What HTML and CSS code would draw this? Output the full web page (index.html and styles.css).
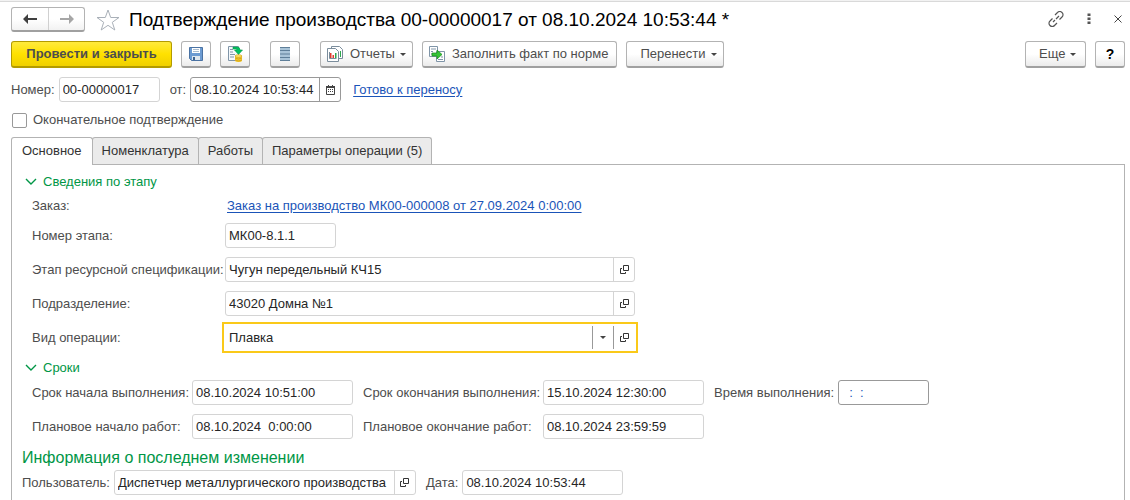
FILE: index.html
```html
<!DOCTYPE html>
<html lang="ru">
<head>
    <meta charset="UTF-8">
    <meta name="viewport" content="width=device-width, initial-scale=1.0">
    <title>Подтверждение производства</title>
    <link rel="stylesheet" href="styles.css">
</head>
<body>
    <svg class="sprite" aria-hidden="true">
        <symbol id="icon-open" viewBox="0 0 9 9">
            <path d="M3.500 .5h5v5h-5zM2 3.500H.5v5h5V7" fill="none" stroke="#333" />
        </symbol>
        <symbol id="icon-chevron" viewBox="0 0 12 8">
            <path d="M1 1l5 5 5-5" fill="none" stroke="#009646" stroke-width="1.4" />
        </symbol>
    </svg>

    <header class="title-bar">
        <div class="nav-buttons">
            <button type="button" aria-label="Назад">
                <svg width="14" height="10" viewBox="0 0 14 10"><path d="M0 5L5 0v4h9v2H5v4z" fill="#404040" /></svg>
            </button>
            <button type="button" aria-label="Вперед">
                <svg width="14" height="10" viewBox="0 0 14 10"><path d="M14 5L9 0v4H0v2h9v4z" fill="#a6a6a6" /></svg>
            </button>
        </div>
        <button type="button" class="icon-btn star" aria-label="Избранное">
            <svg width="24" height="22" viewBox="0 0 24 22"><path d="M12 1l2.700 7.500h8.300l-6.700 4.800 2.500 7.700L12 16.300 5.200 21l2.500-7.700L1 8.500h8.300z" fill="#fff" stroke="#a9b0b8" /></svg>
        </button>
        <h1>Подтверждение производства 00-00000017 от 08.10.2024 10:53:44 *</h1>
        <div class="window-actions">
            <button type="button" class="icon-btn" aria-label="Ссылка">
                <svg width="16" height="16" viewBox="0 0 16 16"><path d="M5 11l2-2M8 8l3-3M7 4l2.500-2.500a3 3 0 0 1 4.500 0a3 3 0 0 1 0 4.500L11.500 8.500M9 12l-2.500 2.500a3 3 0 0 1-4.500 0a3 3 0 0 1 0-4.500L4.500 7.500" fill="none" stroke="#555" stroke-width="1.200" /></svg>
            </button>
            <button type="button" class="icon-btn" aria-label="Меню">
                <svg width="4" height="12" viewBox="0 0 4 12"><path d="M.5 .5h3v2.500h-3zM.5 4.500h3V7h-3zM.5 8.500h3V11h-3z" fill="#555" /></svg>
            </button>
            <button type="button" class="icon-btn" aria-label="Закрыть">
                <svg width="8" height="8" viewBox="0 0 8 8"><path d="M.5 .5l7 7M7.500 .5l-7 7" stroke="#444" /></svg>
            </button>
        </div>
    </header>

    <div class="toolbar">
        <button type="button" class="btn btn-primary">Провести и закрыть</button>
        <button type="button" class="btn btn-square" aria-label="Записать">
            <svg width="16" height="16" viewBox="0 0 16 16">
                <path d="M1.500 1.500h13v13h-11l-2-2z" fill="#6c9bd2" stroke="#4a72a3" />
                <path d="M4 2h8v5H4z" fill="#fff" />
                <path d="M5 3.500h6M5 5.500h6" stroke="#a9bccf" />
                <path d="M4 10h8v4H4z" fill="#dfe7ee" />
                <path d="M5 11h2v3H5z" fill="#3d638f" />
            </svg>
        </button>
        <button type="button" class="btn btn-square" aria-label="Провести">
            <svg width="16" height="16" viewBox="0 0 16 16">
                <path d="M1.500 .5h10v14h-10z" fill="#f4f8fb" stroke="#8095a8" />
                <path d="M3 3.500h3M3 6h3M3 8.500h5M3 11h4" stroke="#8095a8" />
                <path d="M6 1h4q3 0 3 3h2.500L11.500 8.500 7.500 4H10q0-1-1.500-1H6z" fill="#00c060" stroke="#009a48" stroke-width=".6" />
                <path d="M8 10v4.500c0 2 7 2 7 0V10z" fill="#f2c830" />
                <ellipse cx="11.500" cy="10" rx="3.500" ry="1.300" fill="#ffe36b" stroke="#c99a13" stroke-width=".6" />
                <path d="M8 12q3.500 2 7 0M8 14q3.500 2 7 0" fill="none" stroke="#c99a13" stroke-width=".7" />
            </svg>
        </button>
        <button type="button" class="btn btn-square gap-before" aria-label="Реестр">
            <svg width="12" height="16" viewBox="0 0 12 16">
                <path d="M1 1h10v14H1z" fill="#a9c4d8" />
                <path d="M1 1.500h10M1 4.500h10M1 8h10M1 11.500h10M1 14.500h10" stroke="#5f7f99" />
            </svg>
        </button>
        <button type="button" class="btn gap-before">
            <svg width="16" height="16" viewBox="0 0 16 16">
                <path d="M4.500 .5h8l3 3v9h-11z" fill="#fff" stroke="#7b8d9c" />
                <path d="M.5 2.500h8l3 3v10H.5z" fill="#fff" stroke="#7b8d9c" />
                <path d="M2.500 6v6.500h7" fill="none" stroke="#7b8d9c" />
                <path d="M3 7h1.500v5H3zM5.500 9H7v3H5.500z" fill="#e03c31" />
                <path d="M8 7h1.500v5H8zM13 5h1v6h-1z" fill="#2fa84f" />
            </svg>
            <span>Отчеты</span><i class="caret"></i>
        </button>
        <button type="button" class="btn btn-fill">
            <svg width="16" height="16" viewBox="0 0 16 16">
                <path d="M.5 .5h8v10h-8z" fill="#fff" stroke="#8095a8" />
                <path d="M2 3h5M2 5.500h2M2 8h2" stroke="#8095a8" />
                <path d="M7.500 5.500h8v10h-8z" fill="#fff" stroke="#8095a8" />
                <path d="M9 13.500h5M12 11h2" stroke="#8095a8" />
                <path d="M3 7h5V4l5 4.500L8 13v-3H3z" fill="#35c435" stroke="#198a1d" stroke-width=".7" />
            </svg>
            <span>Заполнить факт по норме</span>
        </button>
        <button type="button" class="btn btn-text"><span>Перенести</span><i class="caret"></i></button>
        <button type="button" class="btn btn-text push-right"><span>Еще</span><i class="caret"></i></button>
        <button type="button" class="btn btn-square btn-help">?</button>
    </div>

    <div class="form-row header-row">
        <label for="number">Номер:</label>
        <input type="text" id="number" class="field number-field" value="00-00000017" readonly>
        <label for="date" class="next-label">от:</label>
        <div class="field combo active date-field">
            <input type="text" id="date" value="08.10.2024 10:53:44">
            <button type="button" aria-label="Выбрать дату">
                <svg width="9" height="10" viewBox="0 0 9 10">
                    <path d="M.5 1.500h8v8h-8z" fill="none" stroke="#444" />
                    <path d="M0 1h9v2H0zM2 0h1v1H2zM6 0h1v1H6z" fill="#444" />
                    <path d="M2 4.500h5M2 6.500h5" stroke="#444" stroke-dasharray="1 1" />
                </svg>
            </button>
        </div>
        <a href="#" class="ready-link">Готово к переносу</a>
    </div>

    <div class="check-row">
        <input type="checkbox" id="final">
        <label for="final">Окончательное подтверждение</label>
    </div>

    <div class="tabs" role="tablist">
        <button type="button" role="tab" class="tab selected" aria-selected="true">Основное</button>
        <button type="button" role="tab" class="tab">Номенклатура</button>
        <button type="button" role="tab" class="tab">Работы</button>
        <button type="button" role="tab" class="tab">Параметры операции (5)</button>
    </div>

    <main class="panel">
        <h2 class="group-title"><svg width="12" height="8"><use href="#icon-chevron" /></svg>Сведения по этапу</h2>
        <div class="stage-grid">
            <span>Заказ:</span>
            <a href="#" class="order-link">Заказ на производство МК00-000008 от 27.09.2024 0:00:00</a>

            <label for="stage">Номер этапа:</label>
            <input type="text" id="stage" class="field stage-field" value="МК00-8.1.1" readonly>

            <label for="spec">Этап ресурсной спецификации:</label>
            <div class="field combo">
                <input type="text" id="spec" value="Чугун передельный КЧ15" readonly>
                <button type="button" aria-label="Открыть"><svg width="9" height="9"><use href="#icon-open" /></svg></button>
            </div>

            <label for="department">Подразделение:</label>
            <div class="field combo">
                <input type="text" id="department" value="43020 Домна №1" readonly>
                <button type="button" aria-label="Открыть"><svg width="9" height="9"><use href="#icon-open" /></svg></button>
            </div>

            <label for="operation">Вид операции:</label>
            <div class="field combo focused">
                <input type="text" id="operation" value="Плавка">
                <button type="button" aria-label="Выбрать"><i class="caret"></i></button>
                <button type="button" aria-label="Открыть"><svg width="9" height="9"><use href="#icon-open" /></svg></button>
            </div>
        </div>

        <h2 class="group-title terms-title"><svg width="12" height="8"><use href="#icon-chevron" /></svg>Сроки</h2>
        <div class="terms-grid">
            <label for="start">Срок начала выполнения:</label>
            <input type="text" id="start" class="field" value="08.10.2024 10:51:00" readonly>
            <label for="end" class="inner-label">Срок окончания выполнения:</label>
            <input type="text" id="end" class="field" value="15.10.2024 12:30:00" readonly>
            <label for="duration" class="inner-label">Время выполнения:</label>
            <input type="text" id="duration" class="field active duration-field" value="  :  :">

            <label for="planStart">Плановое начало работ:</label>
            <input type="text" id="planStart" class="field" value="08.10.2024  0:00:00" readonly>
            <label for="planEnd" class="inner-label">Плановое окончание работ:</label>
            <input type="text" id="planEnd" class="field" value="08.10.2024 23:59:59" readonly>
        </div>

        <h2 class="info-title">Информация о последнем изменении</h2>
        <div class="form-row">
            <label for="user">Пользователь:</label>
            <div class="field combo user-field">
                <input type="text" id="user" value="Диспетчер металлургического производства" readonly>
                <button type="button" aria-label="Открыть"><svg width="9" height="9"><use href="#icon-open" /></svg></button>
            </div>
            <label for="changed" class="next-label">Дата:</label>
            <input type="text" id="changed" class="field changed-field" value="08.10.2024 10:53:44" readonly>
        </div>
    </main>
</body>
</html>
```

FILE: styles.css
```css
* {
    box-sizing: border-box;
    margin: 0;
    padding: 0;
}

html {
    height: 100%;
}

body {
    display: flex;
    flex-direction: column;
    min-height: 100%;
    padding: 6px 5px 0 11px;
    border-top: 1px solid #f2f2f2;
    box-shadow: inset 0 1px #d9d9d9;
    background-color: #fff;
    color: #4d4d4d;
    font-family: "Liberation Sans", Arial, sans-serif;
    font-size: 13px;
    line-height: 16px;
}

button,
input {
    font: inherit;
    color: inherit;
}

button {
    border: none;
    background: none;
    cursor: pointer;
}

svg {
    display: block;
    flex: none;
}

a {
    color: #1a54b8;
    text-underline-offset: 2px;
}

.sprite {
    position: absolute;
    width: 0;
    height: 0;
}

/* Title bar */
.title-bar {
    display: flex;
    align-items: center;
    height: 25px;
}

.nav-buttons {
    display: flex;
    height: 25px;
    border: 1px solid #b3b3b3;
    border-bottom: 2px solid #a0a0a0;
    border-radius: 3px;
    background: linear-gradient(#fff 50%, #f2f2f2);
}

.nav-buttons button {
    display: flex;
    align-items: center;
    justify-content: center;
    width: 36px;
}

.nav-buttons button + button {
    border-left: 1px solid #d0d0d0;
}

.icon-btn {
    display: flex;
    align-items: center;
    justify-content: center;
}

.star {
    margin: 0 9px 0 11px;
}

h1 {
    color: #000;
    font-size: 19px;
    font-weight: normal;
    line-height: 24px;
    white-space: nowrap;
}

.window-actions {
    display: flex;
    align-self: flex-start;
    gap: 23px;
    height: 23px;
    margin-left: auto;
    padding-right: 3px;
}

/* Toolbar */
.toolbar {
    display: flex;
    gap: 9px;
    margin-top: 9px;
}

.btn {
    display: flex;
    align-items: center;
    height: 27px;
    padding: 0 6px;
    border: 1px solid #b3b3b3;
    border-bottom: 2px solid #a0a0a0;
    border-radius: 3px;
    background: linear-gradient(#fff 50%, #ebebeb);
    white-space: nowrap;
}

.btn svg + span {
    margin-left: 7px;
}

.btn .caret {
    margin-left: 5px;
}

.btn-primary {
    justify-content: center;
    min-width: 161px;
    padding: 0 13px;
    border-color: #b39b00;
    background: linear-gradient(#ffea3d, #ffe100 50%, #f0d000);
    font-weight: bold;
}

.btn-square {
    justify-content: center;
    width: 30px;
}

.btn-fill {
    padding-right: 8px;
}

.btn-text {
    padding-left: 13px;
}

.gap-before {
    margin-left: 11px;
}

.push-right {
    min-width: 61px;
    margin-left: auto;
}

.btn-help {
    color: #000;
    font-size: 14px;
    font-weight: bold;
}

.caret {
    border: 3px solid transparent;
    border-top-color: #444;
    border-bottom: none;
}

/* Fields */
.form-row {
    display: flex;
    align-items: center;
}

.header-row {
    margin-top: 9px;
}

.field {
    height: 25px;
    padding: 0 3px;
    border: 1px solid #d4d4d4;
    border-radius: 3px;
    background-color: #fff;
    color: #262626;
    white-space: pre;
}

.field.active {
    border-color: #999;
}

.combo {
    display: flex;
    padding: 0;
}

.combo input {
    flex: 1;
    min-width: 0;
    padding: 0 3px;
    border: none;
    outline: none;
    background: none;
}

.combo button {
    display: flex;
    align-items: center;
    justify-content: center;
    width: 21px;
    border-left: 1px solid #d4d4d4;
}

.combo.active button,
.combo.focused button {
    border-color: #999;
}

.combo.focused {
    height: 31px;
    margin: -3px;
    padding: 2px;
    border: 2px solid #fac919;
    border-radius: 0;
}

.number-field {
    width: 101px;
    margin-left: 4px;
}

.next-label {
    margin: 0 4px 0 10px;
}

.date-field {
    width: 151px;
}

.ready-link {
    margin-left: 12px;
}

.check-row {
    display: flex;
    align-items: center;
    gap: 6px;
    margin-top: 9px;
    height: 18px;
}

.check-row input {
    appearance: none;
    width: 15px;
    height: 15px;
    margin-left: 1px;
    border: 1px solid #999;
    border-radius: 2px;
}

/* Tabs */
.tabs {
    display: flex;
    margin-top: 8px;
}

.tab {
    height: 27px;
    margin-left: -1px;
    padding: 0 9px;
    border: 1px solid #b3b3b3;
    border-bottom: none;
    border-radius: 3px 3px 0 0;
    background-color: #ebebeb;
    color: #333;
}

.tab.selected {
    z-index: 1;
    height: 28px;
    margin: 0 0 -1px;
    padding: 0 10px 1px;
    background-color: #fff;
}

.panel {
    flex: 1;
    padding: 9px 10px 5px;
    border: 1px solid #b3b3b3;
    border-bottom: none;
}

.group-title {
    display: flex;
    align-items: center;
    gap: 6px;
    padding-left: 3px;
    color: #009646;
    font-size: 13px;
    font-weight: normal;
}

.stage-grid {
    display: grid;
    grid-template-columns: 193px 410px;
    grid-template-rows: 17px;
    row-gap: 9px;
    align-items: center;
    margin-top: 7px;
    padding-left: 10px;
    white-space: nowrap;
}

.order-link {
    justify-self: start;
    padding-left: 2px;
}

.stage-field {
    width: 111px;
}

.terms-title {
    margin-top: 10px;
}

.terms-grid {
    display: grid;
    grid-template-columns: 160px 161px 190px 161px 134px 91px;
    row-gap: 9px;
    align-items: center;
    margin-top: 4px;
    padding-left: 10px;
    white-space: nowrap;
}

.terms-grid .field {
    width: 100%;
}

.inner-label {
    padding-left: 10px;
}

.duration-field {
    color: #1a54b8;
}

.info-title {
    margin: 9px 0 2px;
    color: #009646;
    font-size: 16px;
    font-weight: normal;
    line-height: 20px;
}

.user-field {
    width: 302px;
    margin-left: 4px;
}

.changed-field {
    width: 161px;
}
```
